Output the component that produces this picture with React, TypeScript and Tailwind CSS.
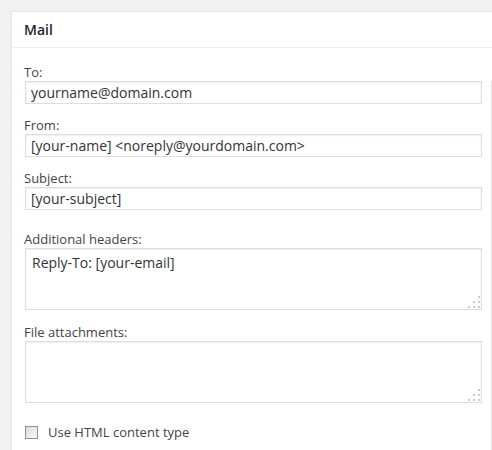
import React from "react";

const font = { fontFamily: '"Open Sans", "Noto Sans", Arial, sans-serif' };

function Grip() {
  // little dotted resize grip in the textarea corner
  const dots = [
    [10, 0],
    [5, 5],
    [10, 5],
    [0, 10],
    [5, 10],
    [10, 10],
  ];
  return (
    <svg
      width="12"
      height="12"
      viewBox="0 0 12 12"
      className="pointer-events-none absolute bottom-[2px] right-[2px]"
    >
      {dots.map(([x, y], i) => (
        <rect key={i} x={x} y={y} width="2" height="2" fill="#c9c9c9" />
      ))}
    </svg>
  );
}

function Field({
  label,
  value,
  className,
}: {
  label: string;
  value: string;
  className?: string;
}) {
  return (
    <div className={className}>
      <label className="block h-[18px] text-[13px] leading-[18px] text-[#444]">{label}</label>
      <input
        readOnly
        value={value}
        className="ml-px block h-[23px] w-[457px] border border-[#ddd] bg-white px-[5px] text-[14px] leading-[21px] text-[#333] shadow-[inset_0_1px_2px_rgba(0,0,0,0.07)] outline-none"
        style={font}
      />
    </div>
  );
}

function Area({
  label,
  value,
  className,
}: {
  label: string;
  value: string;
  className?: string;
}) {
  return (
    <div className={className}>
      <label className="block h-[18px] text-[13px] leading-[18px] text-[#444]">{label}</label>
      <div className="relative ml-px h-[62px] w-[457px]">
        <textarea
          readOnly
          value={value}
          className="block h-full w-full resize-none border border-[#ddd] bg-white px-[6px] pt-[4px] text-[14px] leading-[20px] text-[#333] shadow-[inset_0_1px_2px_rgba(0,0,0,0.07)] outline-none"
          style={font}
        />
        <Grip />
      </div>
    </div>
  );
}

export default function App() {
  return (
    <div className="min-h-[450px] bg-[#f1f1f1] pl-[11px] pt-[11px]" style={font}>
      <div className="min-h-[439px] border-l border-t border-[#e5e5e5] bg-white">
        {/* Header */}
        <div className="flex h-[36px] items-center border-b border-[#eee] pl-[12px]">
          <h3 className="text-[14px] font-semibold text-[#23282d]">Mail</h3>
        </div>

        <div className="flex">
          <div className="flex-1 pb-[14px] pl-[12px] pr-[9px] pt-[15px]">
            <Field label="To:" value="yourname@domain.com" />
            <Field className="mt-[12px]" label="From:" value="[your-name] <noreply@yourdomain.com>" />
            <Field className="mt-[12px]" label="Subject:" value="[your-subject]" />
            <Area className="mt-[20px]" label="Additional headers:" value="Reply-To: [your-email]" />
            <Area className="mt-[13px]" label="File attachments:" value="" />

            <label className="mt-[20px] flex items-center gap-[10px] pl-px">
              <span className="block h-[13px] w-[13px] border border-[#8f8f8f] bg-gradient-to-br from-[#dcdcdc] to-[#f8f8f8]" />
              <span className="text-[13px] leading-[18px] text-[#444]">Use HTML content type</span>
            </label>
          </div>
          <div className="mt-[33px] w-px bg-[#e5e5e5]" />
        </div>
      </div>
    </div>
  );
}
